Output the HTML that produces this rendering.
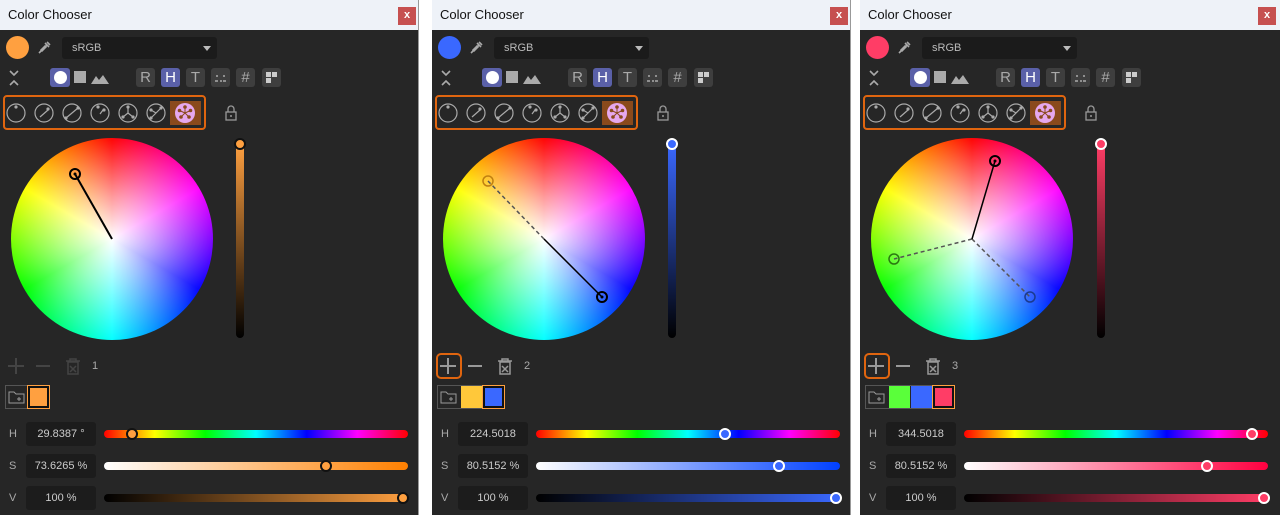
<!DOCTYPE html>
<html><head><meta charset="utf-8"><style>
*{margin:0;padding:0;box-sizing:border-box}
body{width:1280px;height:515px;background:#fff;position:relative;overflow:hidden;font-family:"Liberation Sans",sans-serif}
.p{position:absolute;top:0;width:419px;height:515px;background:#262626;border-right:1px solid #999}
.tb{position:absolute;left:0;top:0;width:100%;height:30px;background:#eef2f8;color:#111;font-size:13px;line-height:30px;padding-left:8px}
.cl{position:absolute;left:398px;top:7px;width:18px;height:18px;background:#c65050;color:#fff;font-size:11px;line-height:17px;text-align:center;font-weight:bold}
.a{position:absolute}
.sw{position:absolute;left:6px;top:36px;width:23px;height:23px;border-radius:50%}
.dd{position:absolute;left:62px;top:37px;width:155px;height:22px;background:#1b1b1b;border-radius:3px;color:#bbb;font-size:11px;line-height:22px;padding-left:10px}
.dd:after{content:"";position:absolute;right:6px;top:9px;border:4px solid transparent;border-top:5px solid #bbb}
.bt{position:absolute;top:68px;width:19px;height:19px;background:#3e3e3e;border-radius:3px;color:#aaa;font-size:15px;line-height:19px;text-align:center}
.bt.on{background:#5a60a8;color:#fff}
.ob{position:absolute;left:3px;top:95px;width:203px;height:35px;border:2px solid #e0650f;border-radius:4px}
.wh{position:absolute;left:11px;top:138px;width:202px;height:202px;border-radius:50%;background:conic-gradient(red,#f0f,#00f,#0ff,#0f0,#ff0,red)}
.wh:after{content:"";position:absolute;inset:0;border-radius:50%;background:radial-gradient(circle,#fff 0%,rgba(255,255,255,.6) 30%,rgba(255,255,255,0) 72%)}
.vs{position:absolute;left:236px;top:143px;width:8px;height:195px;border-radius:4px}
.th{position:absolute;width:12px;height:12px;border-radius:50%;border:2px solid #111}
.lb{position:absolute;left:9px;color:#aaa;font-size:11px}
.in{position:absolute;left:26px;width:70px;height:24px;background:#1c1c1c;border-radius:3px;color:#ccc;font-size:11px;line-height:24px;text-align:center;overflow:hidden;white-space:nowrap}
.sl{position:absolute;left:104px;width:304px;height:8px;border-radius:4px}
.hue{background:linear-gradient(90deg,red,#ff0,#0f0,#0ff,#00f,#f0f,red)}
.num{position:absolute;left:92px;top:360px;color:#aaa;font-size:11px}
</style></head><body>

<!-- PANEL TEMPLATE via repeated markup -->
<div class="p" style="left:0">
<div class="tb">Color Chooser</div><div class="cl">x</div>
<div class="sw" style="background:#ffa040"></div>
<svg class="a" style="left:37px;top:39px" width="16" height="16" viewBox="0 0 16 16"><path d="M3 13 L10 6 M8 4 L12 8 M10 3 L13 6 M3 13 L2 14" stroke="#aaa" stroke-width="1.6" fill="none"/><path d="M4 12 L9 7" stroke="#aaa" stroke-width="3"/></svg>
<div class="dd">sRGB</div>
<svg class="a" style="left:8px;top:69px" width="12" height="18"><path d="M2 2 L6 6 L10 2 M2 16 L6 12 L10 16" stroke="#aaa" stroke-width="1.6" fill="none"/></svg>
<div class="a" style="left:50px;top:68px;width:20px;height:19px;background:#5a60a8;border-radius:3px"></div>
<div class="a" style="left:54px;top:71px;width:13px;height:13px;border-radius:50%;background:#fff"></div>
<div class="a" style="left:74px;top:71px;width:12px;height:12px;background:#aaa"></div>
<svg class="a" style="left:90px;top:70px" width="20" height="15"><path d="M1 14 L6 6 L9 10 L13 5 L19 14Z" fill="#aaa"/></svg>
<div class="bt" style="left:136px">R</div><div class="bt on" style="left:161px">H</div><div class="bt" style="left:186px">T</div>
<div class="bt" style="left:211px"><svg width="19" height="19"><path d="M6 7v2M13 7v2M4 13h3M9 13h2M12 13h3" stroke="#aaa" stroke-width="1.5"/></svg></div>
<div class="bt" style="left:236px">#</div>
<div class="bt" style="left:262px"><svg width="19" height="19"><rect x="4" y="4" width="5" height="5" fill="#ccc"/><rect x="10" y="4" width="5" height="5" fill="#ccc"/><rect x="4" y="10" width="5" height="5" fill="#ccc"/></svg></div>
<div class="ob"></div>
<svg class="a" style="left:5px;top:101px" width="200" height="24"><g stroke="#aaa" stroke-width="1.2" fill="none"><circle cx="11" cy="12" r="9"/><circle cx="39" cy="12" r="9"/><circle cx="67" cy="12" r="9"/><circle cx="95" cy="12" r="9"/><circle cx="123" cy="12" r="9"/><circle cx="151" cy="12" r="9"/><path d="M35 16 L43 9 M61 17 L73 7 M95 13 L98 9 M123 12 L123 6 M123 12 L118 16 M123 12 L128 16 M146 17 L156 7 M151 12 L146 9"/></g><g fill="#aaa"><circle cx="11" cy="6" r="1.6"/><circle cx="43" cy="8" r="1.6"/><circle cx="61" cy="17" r="1.6"/><circle cx="73" cy="7" r="1.6"/><circle cx="93" cy="6" r="1.6"/><circle cx="99" cy="9" r="1.6"/><circle cx="123" cy="6" r="1.6"/><circle cx="118" cy="16" r="1.6"/><circle cx="128" cy="16" r="1.6"/><circle cx="146" cy="9" r="1.6"/><circle cx="156" cy="7" r="1.6"/><circle cx="146" cy="17" r="1.6"/></g><rect x="165" y="-3" width="31" height="30" rx="3" fill="#8a4a1c"/><circle cx="180" cy="12" r="10" fill="#e6a8ee"/><g fill="#8a4a1c"><circle cx="180" cy="6" r="1.8"/><circle cx="185.5" cy="9.5" r="1.8"/><circle cx="184" cy="16" r="1.8"/><circle cx="176" cy="16" r="1.8"/><circle cx="174.5" cy="9.5" r="1.8"/></g><path d="M180 12 L180 6 M180 12 L185.5 9.5 M180 12 L184 16 M180 12 L176 16 M180 12 L174.5 9.5" stroke="#8a4a1c"/></svg>
<svg class="a" style="left:224px;top:104px" width="14" height="17"><path d="M4 8 V5 a3 3 0 0 1 6 0 V8" stroke="#999" stroke-width="1.3" fill="none"/><rect x="2" y="8" width="10" height="8" stroke="#999" stroke-width="1.3" fill="none"/><circle cx="7" cy="12" r="1" fill="#999"/></svg>
<div class="wh"></div>
<svg class="a" style="left:11px;top:138px" width="202" height="202"><path d="M101 101 L64 36" stroke="#000" stroke-width="2"/><circle cx="64" cy="36" r="5" stroke="#000" stroke-width="2" fill="none"/><circle cx="64" cy="36" r="1.5" fill="#000"/></svg>
<div class="vs" style="background:linear-gradient(#ffa040,#000)"></div>
<div class="th" style="left:234px;top:138px;background:#ffa040"></div>
<svg class="a" style="left:6px;top:356px" width="90" height="20"><g stroke="#444" stroke-width="2" fill="none"><path d="M10 2v16M2 10h16M30 10h14"/><path d="M60 5h14M64 5V3h6v2M62 6h10v12H62z M64 10l6 6M70 10l-6 6" stroke-width="1.5"/></g></svg>
<div class="num">1</div>
<div class="a" style="left:5px;top:385px;width:45px;height:24px;border:1px solid #555"></div>
<svg class="a" style="left:8px;top:390px" width="18" height="14"><path d="M1 2h5l2 2h8v9H1z" stroke="#999" fill="none"/><path d="M11 7v4M9 9h4" stroke="#999"/></svg>
<div class="a" style="left:28px;top:386px;width:21px;height:22px;background:#ffa040;border:2px solid #111;outline:1px solid #ffa040"></div>
<div class="lb" style="top:428px">H</div><div class="in" style="top:422px">29.8387 °</div><div class="sl hue" style="top:430px"></div><div class="th" style="left:126px;top:428px;background:#ffa040"></div>
<div class="lb" style="top:460px">S</div><div class="in" style="top:454px">73.6265 %</div><div class="sl" style="top:462px;background:linear-gradient(90deg,#fff,#ff8000)"></div><div class="th" style="left:320px;top:460px;background:#ffa040"></div>
<div class="lb" style="top:492px">V</div><div class="in" style="top:486px">100 %</div><div class="sl" style="top:494px;background:linear-gradient(90deg,#000,#ffa040)"></div><div class="th" style="left:397px;top:492px;background:#ffa040"></div>
</div>

<div class="p" style="left:432px">
<div class="tb">Color Chooser</div><div class="cl">x</div>
<div class="sw" style="background:#3a68ff"></div>
<svg class="a" style="left:37px;top:39px" width="16" height="16" viewBox="0 0 16 16"><path d="M3 13 L10 6 M8 4 L12 8 M10 3 L13 6 M3 13 L2 14" stroke="#aaa" stroke-width="1.6" fill="none"/><path d="M4 12 L9 7" stroke="#aaa" stroke-width="3"/></svg>
<div class="dd">sRGB</div>
<svg class="a" style="left:8px;top:69px" width="12" height="18"><path d="M2 2 L6 6 L10 2 M2 16 L6 12 L10 16" stroke="#aaa" stroke-width="1.6" fill="none"/></svg>
<div class="a" style="left:50px;top:68px;width:20px;height:19px;background:#5a60a8;border-radius:3px"></div>
<div class="a" style="left:54px;top:71px;width:13px;height:13px;border-radius:50%;background:#fff"></div>
<div class="a" style="left:74px;top:71px;width:12px;height:12px;background:#aaa"></div>
<svg class="a" style="left:90px;top:70px" width="20" height="15"><path d="M1 14 L6 6 L9 10 L13 5 L19 14Z" fill="#aaa"/></svg>
<div class="bt" style="left:136px">R</div><div class="bt on" style="left:161px">H</div><div class="bt" style="left:186px">T</div>
<div class="bt" style="left:211px"><svg width="19" height="19"><path d="M6 7v2M13 7v2M4 13h3M9 13h2M12 13h3" stroke="#aaa" stroke-width="1.5"/></svg></div>
<div class="bt" style="left:236px">#</div>
<div class="bt" style="left:262px"><svg width="19" height="19"><rect x="4" y="4" width="5" height="5" fill="#ccc"/><rect x="10" y="4" width="5" height="5" fill="#ccc"/><rect x="4" y="10" width="5" height="5" fill="#ccc"/></svg></div>
<div class="ob"></div>
<svg class="a" style="left:5px;top:101px" width="200" height="24"><g stroke="#aaa" stroke-width="1.2" fill="none"><circle cx="11" cy="12" r="9"/><circle cx="39" cy="12" r="9"/><circle cx="67" cy="12" r="9"/><circle cx="95" cy="12" r="9"/><circle cx="123" cy="12" r="9"/><circle cx="151" cy="12" r="9"/><path d="M35 16 L43 9 M61 17 L73 7 M95 13 L98 9 M123 12 L123 6 M123 12 L118 16 M123 12 L128 16 M146 17 L156 7 M151 12 L146 9"/></g><g fill="#aaa"><circle cx="11" cy="6" r="1.6"/><circle cx="43" cy="8" r="1.6"/><circle cx="61" cy="17" r="1.6"/><circle cx="73" cy="7" r="1.6"/><circle cx="93" cy="6" r="1.6"/><circle cx="99" cy="9" r="1.6"/><circle cx="123" cy="6" r="1.6"/><circle cx="118" cy="16" r="1.6"/><circle cx="128" cy="16" r="1.6"/><circle cx="146" cy="9" r="1.6"/><circle cx="156" cy="7" r="1.6"/><circle cx="146" cy="17" r="1.6"/></g><rect x="165" y="-3" width="31" height="30" rx="3" fill="#8a4a1c"/><circle cx="180" cy="12" r="10" fill="#e6a8ee"/><g fill="#8a4a1c"><circle cx="180" cy="6" r="1.8"/><circle cx="185.5" cy="9.5" r="1.8"/><circle cx="184" cy="16" r="1.8"/><circle cx="176" cy="16" r="1.8"/><circle cx="174.5" cy="9.5" r="1.8"/></g><path d="M180 12 L180 6 M180 12 L185.5 9.5 M180 12 L184 16 M180 12 L176 16 M180 12 L174.5 9.5" stroke="#8a4a1c"/></svg>
<svg class="a" style="left:224px;top:104px" width="14" height="17"><path d="M4 8 V5 a3 3 0 0 1 6 0 V8" stroke="#999" stroke-width="1.3" fill="none"/><rect x="2" y="8" width="10" height="8" stroke="#999" stroke-width="1.3" fill="none"/><circle cx="7" cy="12" r="1" fill="#999"/></svg>
<div class="wh"></div>
<svg class="a" style="left:11px;top:138px" width="202" height="202"><path d="M101 101 L45 43" stroke="#555" stroke-width="1.5" stroke-dasharray="4 3"/><path d="M101 101 L159 159" stroke="#000" stroke-width="1.5"/><circle cx="45" cy="43" r="5" stroke="#c08010" stroke-width="1.5" fill="none"/><circle cx="159" cy="159" r="5" stroke="#000" stroke-width="2" fill="none"/><circle cx="159" cy="159" r="1.5" fill="#000"/></svg>
<div class="vs" style="background:linear-gradient(#3a68ff,#000)"></div>
<div class="th" style="left:234px;top:138px;background:#3a68ff;border-color:#fff"></div>
<div class="a" style="left:4px;top:353px;width:26px;height:26px;border:2px solid #e0650f;border-radius:5px"></div>
<svg class="a" style="left:6px;top:356px" width="90" height="20"><g stroke="#999" stroke-width="2" fill="none"><path d="M10 2v16M2 10h16M30 10h14"/><path d="M60 5h14M64 5V3h6v2M62 6h10v12H62z M64 10l6 6M70 10l-6 6" stroke-width="1.5"/></g></svg>
<div class="num">2</div>
<div class="a" style="left:5px;top:385px;width:68px;height:24px;border:1px solid #555"></div>
<svg class="a" style="left:8px;top:390px" width="18" height="14"><path d="M1 2h5l2 2h8v9H1z" stroke="#999" fill="none"/><path d="M11 7v4M9 9h4" stroke="#999"/></svg>
<div class="a" style="left:29px;top:386px;width:21px;height:22px;background:#ffc83a"></div>
<div class="a" style="left:51px;top:386px;width:21px;height:22px;background:#3a68ff;border:2px solid #111;outline:1px solid #ffa040"></div>
<div class="lb" style="top:428px">H</div><div class="in" style="top:422px">224.5018</div><div class="sl hue" style="top:430px"></div><div class="th" style="left:287px;top:428px;background:#3a68ff;border-color:#fff"></div>
<div class="lb" style="top:460px">S</div><div class="in" style="top:454px">80.5152 %</div><div class="sl" style="top:462px;background:linear-gradient(90deg,#fff,#0040ff)"></div><div class="th" style="left:341px;top:460px;background:#3a68ff;border-color:#fff"></div>
<div class="lb" style="top:492px">V</div><div class="in" style="top:486px">100 %</div><div class="sl" style="top:494px;background:linear-gradient(90deg,#000,#3a68ff)"></div><div class="th" style="left:398px;top:492px;background:#3a68ff;border-color:#fff"></div>
</div>

<div class="p" style="left:860px;width:420px;border-right:none">
<div class="tb">Color Chooser</div><div class="cl">x</div>
<div class="sw" style="background:#ff3d66"></div>
<svg class="a" style="left:37px;top:39px" width="16" height="16" viewBox="0 0 16 16"><path d="M3 13 L10 6 M8 4 L12 8 M10 3 L13 6 M3 13 L2 14" stroke="#aaa" stroke-width="1.6" fill="none"/><path d="M4 12 L9 7" stroke="#aaa" stroke-width="3"/></svg>
<div class="dd">sRGB</div>
<svg class="a" style="left:8px;top:69px" width="12" height="18"><path d="M2 2 L6 6 L10 2 M2 16 L6 12 L10 16" stroke="#aaa" stroke-width="1.6" fill="none"/></svg>
<div class="a" style="left:50px;top:68px;width:20px;height:19px;background:#5a60a8;border-radius:3px"></div>
<div class="a" style="left:54px;top:71px;width:13px;height:13px;border-radius:50%;background:#fff"></div>
<div class="a" style="left:74px;top:71px;width:12px;height:12px;background:#aaa"></div>
<svg class="a" style="left:90px;top:70px" width="20" height="15"><path d="M1 14 L6 6 L9 10 L13 5 L19 14Z" fill="#aaa"/></svg>
<div class="bt" style="left:136px">R</div><div class="bt on" style="left:161px">H</div><div class="bt" style="left:186px">T</div>
<div class="bt" style="left:211px"><svg width="19" height="19"><path d="M6 7v2M13 7v2M4 13h3M9 13h2M12 13h3" stroke="#aaa" stroke-width="1.5"/></svg></div>
<div class="bt" style="left:236px">#</div>
<div class="bt" style="left:262px"><svg width="19" height="19"><rect x="4" y="4" width="5" height="5" fill="#ccc"/><rect x="10" y="4" width="5" height="5" fill="#ccc"/><rect x="4" y="10" width="5" height="5" fill="#ccc"/></svg></div>
<div class="ob"></div>
<svg class="a" style="left:5px;top:101px" width="200" height="24"><g stroke="#aaa" stroke-width="1.2" fill="none"><circle cx="11" cy="12" r="9"/><circle cx="39" cy="12" r="9"/><circle cx="67" cy="12" r="9"/><circle cx="95" cy="12" r="9"/><circle cx="123" cy="12" r="9"/><circle cx="151" cy="12" r="9"/><path d="M35 16 L43 9 M61 17 L73 7 M95 13 L98 9 M123 12 L123 6 M123 12 L118 16 M123 12 L128 16 M146 17 L156 7 M151 12 L146 9"/></g><g fill="#aaa"><circle cx="11" cy="6" r="1.6"/><circle cx="43" cy="8" r="1.6"/><circle cx="61" cy="17" r="1.6"/><circle cx="73" cy="7" r="1.6"/><circle cx="93" cy="6" r="1.6"/><circle cx="99" cy="9" r="1.6"/><circle cx="123" cy="6" r="1.6"/><circle cx="118" cy="16" r="1.6"/><circle cx="128" cy="16" r="1.6"/><circle cx="146" cy="9" r="1.6"/><circle cx="156" cy="7" r="1.6"/><circle cx="146" cy="17" r="1.6"/></g><rect x="165" y="-3" width="31" height="30" rx="3" fill="#8a4a1c"/><circle cx="180" cy="12" r="10" fill="#e6a8ee"/><g fill="#8a4a1c"><circle cx="180" cy="6" r="1.8"/><circle cx="185.5" cy="9.5" r="1.8"/><circle cx="184" cy="16" r="1.8"/><circle cx="176" cy="16" r="1.8"/><circle cx="174.5" cy="9.5" r="1.8"/></g><path d="M180 12 L180 6 M180 12 L185.5 9.5 M180 12 L184 16 M180 12 L176 16 M180 12 L174.5 9.5" stroke="#8a4a1c"/></svg>
<svg class="a" style="left:224px;top:104px" width="14" height="17"><path d="M4 8 V5 a3 3 0 0 1 6 0 V8" stroke="#999" stroke-width="1.3" fill="none"/><rect x="2" y="8" width="10" height="8" stroke="#999" stroke-width="1.3" fill="none"/><circle cx="7" cy="12" r="1" fill="#999"/></svg>
<div class="wh"></div>
<svg class="a" style="left:11px;top:138px" width="202" height="202"><path d="M101 101 L23 121 M101 101 L159 159" stroke="#555" stroke-width="1.5" stroke-dasharray="4 3"/><path d="M101 101 L124 23" stroke="#000" stroke-width="1.5"/><circle cx="23" cy="121" r="5" stroke="#2a7a10" stroke-width="1.5" fill="none"/><circle cx="159" cy="159" r="5" stroke="#1a3a90" stroke-width="1.5" fill="none"/><circle cx="124" cy="23" r="5" stroke="#000" stroke-width="2" fill="none"/><circle cx="124" cy="23" r="1.5" fill="#000"/></svg>
<div class="vs" style="left:237px;background:linear-gradient(#ff3d66,#000)"></div>
<div class="th" style="left:235px;top:138px;background:#ff3d66;border-color:#fff"></div>
<div class="a" style="left:4px;top:353px;width:26px;height:26px;border:2px solid #e0650f;border-radius:5px"></div>
<svg class="a" style="left:6px;top:356px" width="90" height="20"><g stroke="#999" stroke-width="2" fill="none"><path d="M10 2v16M2 10h16M30 10h14"/><path d="M60 5h14M64 5V3h6v2M62 6h10v12H62z M64 10l6 6M70 10l-6 6" stroke-width="1.5"/></g></svg>
<div class="num">3</div>
<div class="a" style="left:5px;top:385px;width:90px;height:24px;border:1px solid #555"></div>
<svg class="a" style="left:8px;top:390px" width="18" height="14"><path d="M1 2h5l2 2h8v9H1z" stroke="#999" fill="none"/><path d="M11 7v4M9 9h4" stroke="#999"/></svg>
<div class="a" style="left:29px;top:386px;width:21px;height:22px;background:#5aff3a"></div>
<div class="a" style="left:51px;top:386px;width:21px;height:22px;background:#3a68ff"></div>
<div class="a" style="left:73px;top:386px;width:21px;height:22px;background:#ff3d66;border:2px solid #111;outline:1px solid #ffa040"></div>
<div class="lb" style="top:428px">H</div><div class="in" style="top:422px">344.5018</div><div class="sl hue" style="top:430px"></div><div class="th" style="left:386px;top:428px;background:#ff3d66;border-color:#fff"></div>
<div class="lb" style="top:460px">S</div><div class="in" style="top:454px">80.5152 %</div><div class="sl" style="top:462px;background:linear-gradient(90deg,#fff,#ff0040)"></div><div class="th" style="left:341px;top:460px;background:#ff3d66;border-color:#fff"></div>
<div class="lb" style="top:492px">V</div><div class="in" style="top:486px">100 %</div><div class="sl" style="top:494px;background:linear-gradient(90deg,#000,#ff3d66)"></div><div class="th" style="left:398px;top:492px;background:#ff3d66;border-color:#fff"></div>
</div>
</body></html>
